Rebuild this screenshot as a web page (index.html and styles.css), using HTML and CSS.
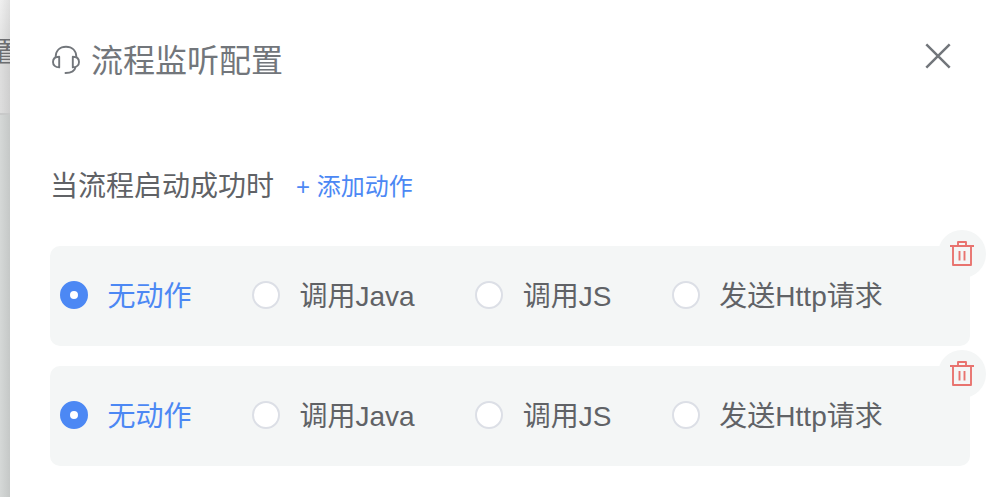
FILE: index.html
```html
<!DOCTYPE html>
<html lang="zh-CN">
<head>
<meta charset="utf-8">
<title>流程监听配置</title>
<link rel="stylesheet" href="styles.css">
</head>
<body>
<svg class="sprite" aria-hidden="true">
  <symbol id="trash" viewBox="0 0 24 26">
    <path d="M0 5H24M8 5V1H16V5M3 5V24H21V5M9.500 10V19.500M14.500 10V19.500" fill="none" stroke="currentColor" stroke-width="1.900" stroke-linejoin="round"/>
  </symbol>
</svg>
<div class="app">
  <div class="backdrop">
    <div class="page-head"><span class="page-title">置</span></div>
    <div class="page-body"></div>
  </div>
  <main class="drawer">
    <header class="drawer-head">
      <svg class="headset" viewBox="0 0 28 30" fill="none" stroke="currentColor" stroke-width="1.900" stroke-linecap="round" stroke-linejoin="round">
        <path d="M3.600 12C3.800 5.500 8 1.800 14 1.800S24.200 5.500 24.400 12"/>
        <path d="M7.200 11.800V22.400C3.400 22.400 1 20.200 1 17S3.400 11.800 7.200 11.800Z"/>
        <path d="M20.800 11.800V22.400C24.600 22.400 27 20.200 27 17S24.600 11.800 20.800 11.800Z"/>
        <path d="M23.400 22.400C22.800 26 20 28 13.500 28"/>
      </svg>
      <h1 class="title">流程监听配置</h1>
      <svg class="close" viewBox="0 0 26 26" fill="none" stroke="currentColor" stroke-width="2.500"><path d="M1.300 1.300L24.700 24.700M24.700 1.300L1.300 24.700"/></svg>
    </header>
    <div class="event">
      <span class="event-name">当流程启动成功时</span>
      <span class="add">+ 添加动作</span>
    </div>
    <section class="card">
      <label class="option checked"><i class="dot"></i><span>无动作</span></label>
      <label class="option"><i class="dot"></i><span>调用Java</span></label>
      <label class="option"><i class="dot"></i><span>调用JS</span></label>
      <label class="option"><i class="dot"></i><span>发送Http请求</span></label>
      <span class="remove"><svg class="trash"><use href="#trash"/></svg></span>
    </section>
    <section class="card">
      <label class="option checked"><i class="dot"></i><span>无动作</span></label>
      <label class="option"><i class="dot"></i><span>调用Java</span></label>
      <label class="option"><i class="dot"></i><span>调用JS</span></label>
      <label class="option"><i class="dot"></i><span>发送Http请求</span></label>
      <span class="remove"><svg class="trash"><use href="#trash"/></svg></span>
    </section>
  </main>
</div>
</body>
</html>
```
FILE: styles.css
```css
* { box-sizing: border-box; }
body {
  margin: 0;
  overflow: hidden;
  font-family: "Liberation Sans", "Noto Sans CJK SC", sans-serif;
  color: #606266;
}
.sprite { display: none; }
.app { display: flex; height: 497px; }
.backdrop {
  width: 10px;
  overflow: hidden;
  display: flex;
  flex-direction: column;
  background: linear-gradient(to right, rgba(0,0,0,0), rgba(0,0,0,.07)), linear-gradient(#f0f0f0, #dedede 60px, #dcdcdc);
}
.page-head {
  height: 115px;
  padding-top: 33px;
  border-bottom: 2px solid #c8c9c9;
}
.page-title { display: block; margin-left: -6px; font-size: 28px; line-height: 40px; color: #6c6d70; }
.page-body { flex: 1; background: linear-gradient(to right, #d5d8d7, #c5c8c7); }
.drawer { width: 980px; background: #fff; padding: 0 20px 0 40px; }
.drawer-head {
  display: flex;
  align-items: center;
  height: 80px;
  margin-top: 20px;
  color: #72767b;
}
.headset { width: 28px; height: 30px; margin-left: 2px; }
.title { margin: 2px 0 0 11px; font-size: 32px; line-height: 48px; font-weight: 400; }
.close { width: 26px; height: 26px; margin: -8px 19px 0 auto; }
.event {
  display: flex;
  align-items: flex-start;
  height: 40px;
  margin: 67px 0 39px;
  line-height: 40px;
}
.event-name { font-size: 28px; }
.add { margin-left: 22px; font-size: 24px; color: #4c88f4; }
.card {
  position: relative;
  display: flex;
  align-items: center;
  gap: 60px;
  height: 100px;
  margin-bottom: 20px;
  padding: 0 10px;
  border-radius: 10px;
  background: #f4f6f6;
}
.option {
  display: flex;
  align-items: center;
  gap: 20px;
  height: 40px;
  font-size: 28px;
  line-height: 42px;
  white-space: nowrap;
}
.option span { margin: 2px 0 0 -0.5px; }
.option + .option { margin-left: 0.5px; }
.dot {
  width: 28px;
  height: 28px;
  margin-top: -2px;
  border: 2px solid #dcdfe6;
  border-radius: 50%;
  background: #fff;
}
.checked { color: #4c88f4; }
.checked .dot { border: 10px solid #4c88f4; }
.remove {
  position: absolute;
  top: -16px;
  right: -16px;
  width: 48px;
  height: 48px;
  border-radius: 50%;
  display: flex;
  justify-content: center;
  background: #f4f6f6;
  color: #e8736f;
}
.trash { width: 24px; height: 26px; margin-top: 11px; }
```
